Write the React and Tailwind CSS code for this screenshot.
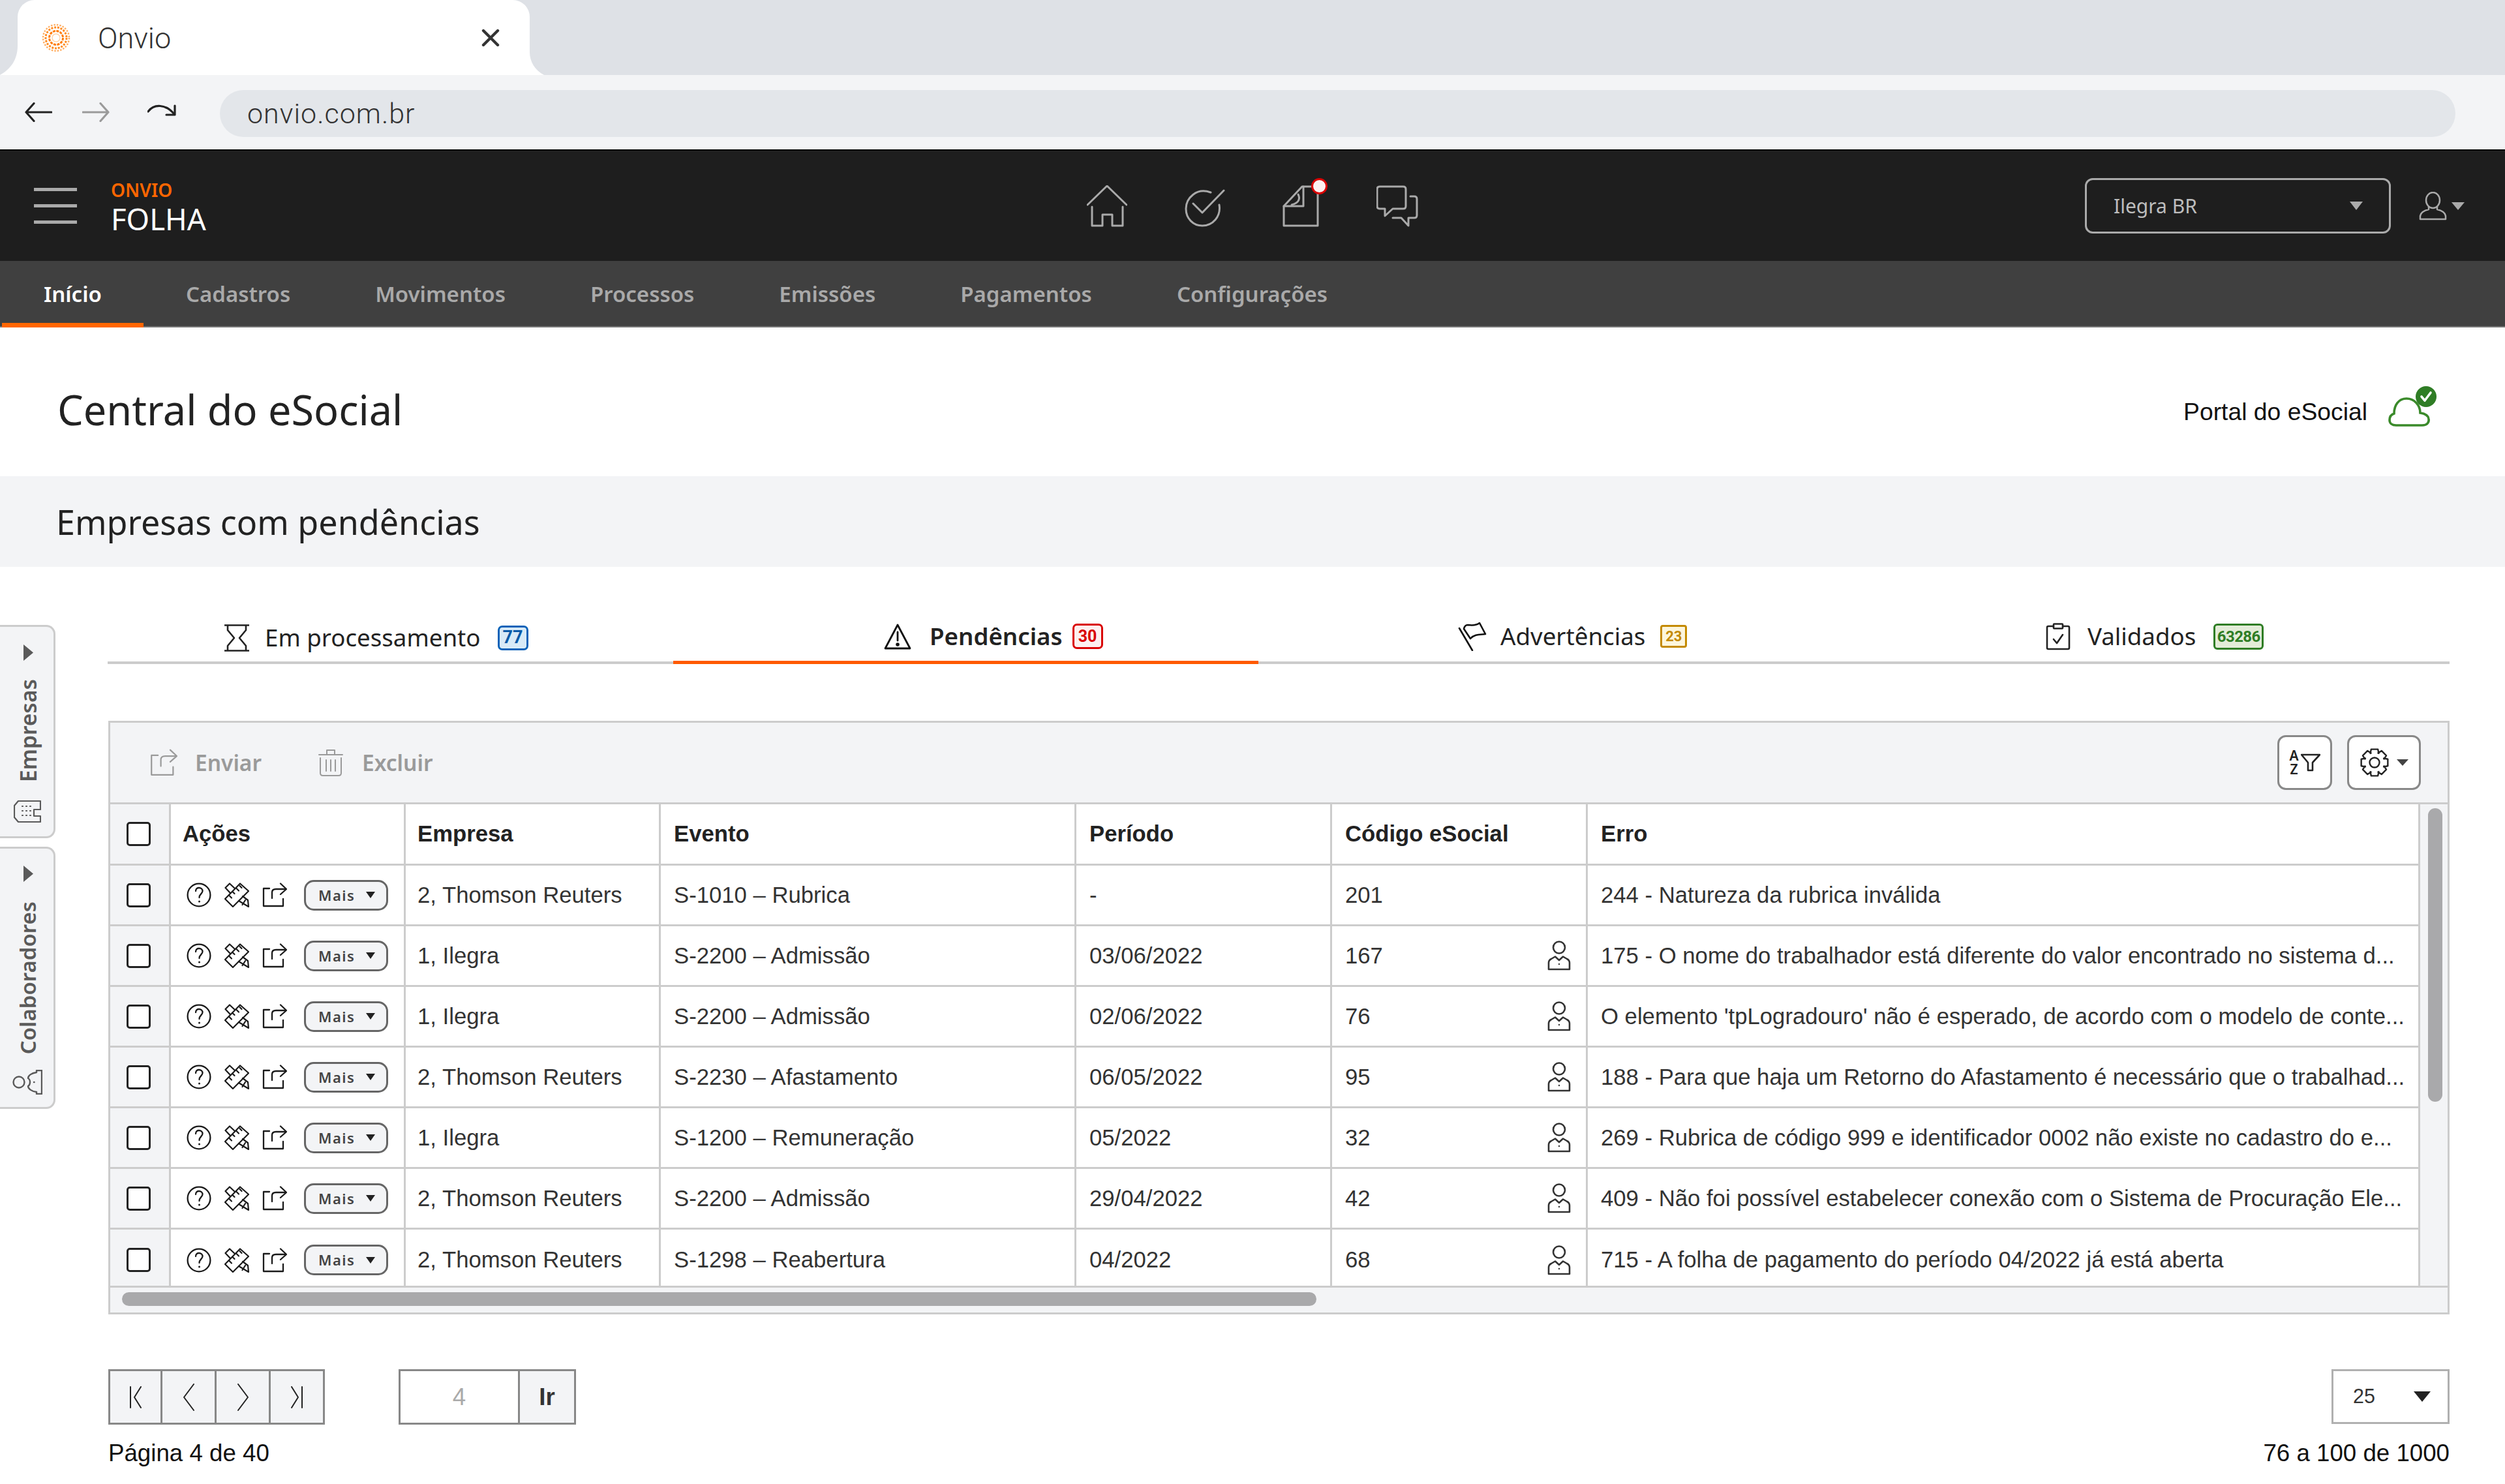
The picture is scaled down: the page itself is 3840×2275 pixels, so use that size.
import React from "react";

const Caret = ({ className = "", dir = "down" }) => (
  <svg viewBox="0 0 20 20" preserveAspectRatio="none" className={className} aria-hidden="true">
    {dir === "down" ? <polygon points="0,0 20,0 10,20" fill="currentColor" /> : <polygon points="0,0 20,10 0,20" fill="currentColor" />}
  </svg>
);

const Home = () => (
  <svg viewBox="0 0 62 64" className="w-[62px] h-[64px]" fill="none" stroke="#aaaaaa" strokeWidth="3" strokeLinecap="round" strokeLinejoin="round">
    <path d="M1 30 L31 1 L61 30" />
    <path d="M8 33 V62 H24 V45 H39 V62 H55 V33" />
  </svg>
);
const CheckCircle = () => (
  <svg viewBox="0 0 62 58" className="w-[62px] h-[58px]" fill="none" stroke="#aaaaaa" strokeWidth="3" strokeLinecap="round" strokeLinejoin="round">
    <path d="M40 5 C18 -3 2 14 2 30 C2 45 13 56 27 56 C43 56 56 42 53 24" />
    <path d="M13 22 L27 36 L60 2" />
  </svg>
);
const Doc = () => (
  <div className="relative w-[56px] h-[64px]">
    <svg viewBox="0 0 56 64" className="w-[56px] h-[64px]" fill="none" stroke="#aaaaaa" strokeWidth="3" strokeLinecap="round" strokeLinejoin="round">
      <path d="M30 2 L2 32 V62 H54 V2 Z" />
      <path d="M2 32 H32 V2" />
      <path d="M24 14 C27 20 26 27 14 30" />
    </svg>
    <span className="absolute right-[-13px] top-[-11px] w-[25px] h-[25px] rounded-full bg-[#fdf0f0] border-[3px] border-[#d90000]" />
  </div>
);
const Chat = () => (
  <svg viewBox="0 0 64 64" className="w-[64px] h-[64px]" fill="none" stroke="#aaaaaa" strokeWidth="3" strokeLinecap="round" strokeLinejoin="round">
    <path d="M5 2 H41 Q45 2 45 6 V32 Q45 36 41 36 H25 L13 47 V36 H5 Q1 36 1 32 V6 Q1 2 5 2 Z" />
    <path d="M52 17 H58 Q62 17 62 21 V46 Q62 50 58 50 H49 V62 L38 50 H25" />
  </svg>
);
const UserBust = () => (
  <svg viewBox="0 0 43 44" className="w-[43px] h-[44px]" fill="none" stroke="#aaaaaa" strokeWidth="2.5" strokeLinejoin="round" strokeLinecap="round">
    <ellipse cx="21.5" cy="13" rx="10.5" ry="12" />
    <path d="M15 23 V27 Q3 30 2 37 V42 H41 V37 Q40 30 28 27 V23" />
  </svg>
);
const RowPerson = () => (
  <svg viewBox="0 0 36 46" className="w-[36px] h-[46px]" fill="none" stroke="#333333" strokeWidth="2.6" strokeLinejoin="round" strokeLinecap="round">
    <circle cx="18" cy="10.5" r="9" />
    <path d="M2 44 V34 Q2 30 6 28 L12 24.5 L18 30 L24 24.5 L30 28 Q34 30 34 34 V44 Z" />
    <circle cx="18" cy="36" r="1.2" fill="#333333" stroke="none" />
  </svg>
);
const Cloud = () => (
  <svg viewBox="0 0 76 62" className="w-[76px] h-[62px]" fill="none">
    <path d="M12 60 H52 C60 60 63 55 62 50 C61 44 56 42 49 41 C49 29 40 19 28 19 C16 19 9 29 9 42 C3 44 2 48 2 52 C2 57 6 60 12 60 Z" stroke="#3a8a2a" strokeWidth="3.6" />
    <circle cx="58" cy="16" r="16" fill="#2f7d25" />
    <path d="M51 16 L56 22 L65 10" stroke="#ffffff" strokeWidth="3.6" strokeLinecap="round" strokeLinejoin="round" />
  </svg>
);
const Hourglass = () => (
  <svg viewBox="0 0 38 42" className="w-[38px] h-[42px]" fill="none" stroke="#222222" strokeWidth="2.6" strokeLinejoin="round">
    <path d="M0 1.5 H38 M0 40.5 H38" />
    <path d="M5 2 V9 L15 21 L5 33 V40 M33 2 V9 L23 21 L33 33 V40" />
  </svg>
);
const Warn = () => (
  <svg viewBox="0 0 42 40" className="w-[42px] h-[40px]" fill="none" stroke="#111111" strokeWidth="2.8" strokeLinejoin="round" strokeLinecap="round">
    <path d="M21 2 L40 38 H2 Z" />
    <path d="M21 13 V26" />
    <circle cx="21" cy="32" r="1.4" fill="#111111" />
  </svg>
);
const Flag = () => (
  <svg viewBox="0 0 44 44" className="w-[44px] h-[44px]" fill="none" stroke="#111111" strokeWidth="2.6" strokeLinejoin="round" strokeLinecap="round">
    <path d="M2 9 L22 43" />
    <path d="M9 10 C10 6 12 4 15 4 C22 5 28 5 33 1 L42 18 C34 19 25 18 19 25 Z" />
  </svg>
);
const Clip = () => (
  <svg viewBox="0 0 38 42" className="w-[38px] h-[42px]" fill="none" stroke="#222222" strokeWidth="2.6" strokeLinejoin="round" strokeLinecap="round">
    <path d="M12 5 H4 Q2 5 2 7 V38 Q2 40 4 40 H34 Q36 40 36 38 V7 Q36 5 34 5 H26" />
    <rect x="12" y="1.5" width="14" height="7" rx="1" />
    <path d="M12 25 L17 31 L26 18" />
  </svg>
);
const Help = () => (
  <svg viewBox="0 0 38 38" className="w-[38px] h-[38px]" fill="none" stroke="#1a1a1a" strokeWidth="2.3" strokeLinecap="round">
    <circle cx="19" cy="19" r="17.4" />
    <path d="M14 13 C14 9.5 16.5 8 19 8 C22 8 24.5 10 24.5 13 C24.5 17 19.5 17.5 19.5 23" />
    <circle cx="19.5" cy="29" r="1.5" fill="#1a1a1a" stroke="none" />
  </svg>
);
const Tools = () => (
  <svg viewBox="0 0 38 38" className="w-[38px] h-[38px]" fill="none" stroke="#1a1a1a" strokeWidth="2.2" strokeLinejoin="round" strokeLinecap="round">
    <path d="M1 25 L24 1.5 L37 13 L13 37 Z" />
    <path d="M7 19.5 L11 23.5 M12.5 14 L15.5 17 M18 8.5 L22 12.5 M23.5 5 L26.5 8" />
    <path d="M9 16 L1.5 8 L8 1.5 L16 9" />
    <path d="M22 28 L37 37 L36 27 L28 21" />
    <path d="M27.5 34 L32 27" />
  </svg>
);
const Share = ({ color = "#1a1a1a", sw = 2.3, w = 38, h = 38 }) => (
  <svg viewBox="0 0 38 38" style={{ width: w, height: h }} fill="none" stroke={color} strokeWidth={sw} strokeLinejoin="round" strokeLinecap="round">
    <path d="M11 9 H2 V36 H32 V25" />
    <path d="M15 24 V15 Q15 10 21 10 H36" />
    <path d="M28 1.5 L37 10 L28 18" />
  </svg>
);
const Trash = () => (
  <svg viewBox="0 0 38 42" className="w-[38px] h-[42px]" fill="none" stroke="#9a9a9a" strokeWidth="2" strokeLinejoin="round" strokeLinecap="round">
    <path d="M1 9 H37 M13 9 V2 H25 V9" />
    <path d="M3 14 V37 Q3 41 7 41 H31 Q35 41 35 37 V14" />
    <path d="M12 17 V34 M19 17 V34 M26 17 V34" />
  </svg>
);
const Building = () => (
  <svg viewBox="0 0 42 34" className="w-[42px] h-[34px]" fill="none" stroke="#5a5a5a" strokeWidth="2.2" strokeLinejoin="round" strokeLinecap="round">
    <path d="M41 1 H7 L1 8 V26 L7 33 H41 V24 H31 V14 H41 Z" />
    <path d="M13 9 H14 M19 9 H20 M25 9 H26 M13 16 H14 M19 16 H20 M25 16 H26 M13 23 H14 M19 23 H20 M25 23 H26" />
  </svg>
);
const Group = () => (
  <svg viewBox="0 0 46 38" className="w-[46px] h-[38px]" fill="none" stroke="#5a5a5a" strokeWidth="2.4" strokeLinejoin="round" strokeLinecap="round">
    <circle cx="10" cy="19" r="8.5" />
    <path d="M45 1 H37 V4 C29 5 24 9 24 13 C28 15 28 23 24 25 C24 29 29 33 37 34 V37 H45 Z" />
    <path d="M33 19 H33.5" />
  </svg>
);
const Logo = () => (
  <svg viewBox="0 0 44 44" className="w-[44px] h-[44px]" fill="none">
    <circle cx="22" cy="22" r="20" stroke="#ffb066" strokeWidth="2.5" strokeDasharray="2.5 2" />
    <circle cx="22" cy="22" r="16" stroke="#ff8a1f" strokeWidth="3" strokeDasharray="3 1.8" />
    <circle cx="22" cy="22" r="10.5" stroke="#ff7a00" strokeWidth="3" strokeDasharray="4 1.5" />
    <circle cx="22" cy="22" r="6" stroke="#ffd2a6" strokeWidth="1.4" />
  </svg>
);
const Arrow = ({ color, flip }) => (
  <svg viewBox="0 0 42 30" className={`w-[42px] h-[30px] ${flip ? "-scale-x-100" : ""}`} fill="none" stroke={color} strokeWidth="3.2" strokeLinecap="round" strokeLinejoin="round">
    <path d="M41 15 H2 M14 1.5 L2 15 L14 28.5" />
  </svg>
);
const Chevron = ({ d, w, h }) => (
  <svg viewBox={`0 0 ${w} ${h}`} style={{ width: w, height: h }} fill="none" stroke="#222222" strokeWidth="2" strokeLinecap="round" strokeLinejoin="round">
    <path d={d} />
  </svg>
);

const gearPath = (() => {
  const pts = [];
  const n = 8, ro = 21, ri = 15.5, cx = 22, cy = 22;
  for (let i = 0; i < n; i++) {
    const a = (i * 2 * Math.PI) / n - Math.PI / 2;
    const w = 0.25, g = 0.18;
    pts.push([a - w - g, ri], [a - w, ro], [a + w, ro], [a + w + g, ri]);
  }
  return pts.map(([a, r], i) => `${i ? "L" : "M"}${(cx + r * Math.cos(a)).toFixed(2)} ${(cy + r * Math.sin(a)).toFixed(2)}`).join(" ") + " Z";
})();
const Gear = () => (
  <svg viewBox="0 0 44 44" className="w-[44px] h-[44px]" fill="none" stroke="#222222" strokeWidth="2.4" strokeLinejoin="round">
    <path d={gearPath} />
    <circle cx="22" cy="22" r="7.5" />
  </svg>
);

const Badge = ({ children, className }) => (
  <span className={`inline-flex items-center justify-center border-[3px] rounded-[7px] font-bold font-['Roboto',sans-serif] ${className}`}>{children}</span>
);

const nav = ["Início", "Cadastros", "Movimentos", "Processos", "Emissões", "Pagamentos", "Configurações"];
const TR = "2, Thomson Reuters";
const IL = "1, Ilegra";
const rows = [
  [TR, "S-1010 – Rubrica", "-", "201", false, "244 - Natureza da rubrica inválida"],
  [IL, "S-2200 – Admissão", "03/06/2022", "167", true, "175 - O nome do trabalhador está diferente do valor encontrado no sistema d..."],
  [IL, "S-2200 – Admissão", "02/06/2022", "76", true, "O elemento 'tpLogradouro' não é esperado, de acordo com o modelo de conte..."],
  [TR, "S-2230 – Afastamento", "06/05/2022", "95", true, "188 - Para que haja um Retorno do Afastamento é necessário que o trabalhad..."],
  [IL, "S-1200 – Remuneração", "05/2022", "32", true, "269 - Rubrica de código 999 e identificador 0002 não existe no cadastro do e..."],
  [TR, "S-2200 – Admissão", "29/04/2022", "42", true, "409 - Não foi possível estabelecer conexão com o Sistema de Procuração Ele..."],
  [TR, "S-1298 – Reabertura", "04/2022", "68", true, "715 - A folha de pagamento do período 04/2022 já está aberta"],
];

const gridCols = "grid grid-cols-[93px_360px_391px_637px_392px_392px_1276px]";
const cell = "flex items-center pl-[18px] border-r-[3px] border-[#cccccc] min-w-0";
const cellB = "flex items-center pl-[20px] border-r-[3px] border-[#cccccc] min-w-0";
const Box = () => <span className="w-[37px] h-[37px] rounded-[5px] border-[3px] border-[#222222] bg-white" />;

const Row = ({ r, last }) => (
  <div className={`${gridCols} h-[93px] ${last ? "" : "border-b-[3px] border-[#cccccc]"} text-[34.7px] text-[#333333]`}>
    <div className="flex items-center justify-center bg-[#f3f4f6] border-r-[3px] border-[#cccccc] pr-[4px]"><Box /></div>
    <div className={`${cell} gap-[20px] !pl-[24px]`}>
      <Help /><Tools /><Share />
      <span className="ml-[6px] h-[47px] w-[129px] shrink-0 rounded-[15px] border-[3px] border-[#666666] bg-[#f3f4f6] flex items-center pl-[19px] font-['Noto_Sans',sans-serif] text-[22px] font-semibold tracking-[1.5px] text-[#444444]">
        Mais
        <Caret className="w-[14px] h-[10px] ml-[17px] text-[#222222]" />
      </span>
    </div>
    <div className={cell}>{r[0]}</div>
    <div className={cellB}>{r[1]}</div>
    <div className={cellB}>{r[2]}</div>
    <div className={`${cellB} justify-between pr-[23px]`}>
      <span>{r[3]}</span>
      {r[4] && <RowPerson />}
    </div>
    <div className={`${cellB} whitespace-nowrap overflow-hidden`}>{r[5]}</div>
  </div>
);

export default function App() {
  return (
    <div className="w-[3840px] h-[2275px] overflow-hidden bg-white font-['Noto_Sans',sans-serif] text-[#222222]">
      {/* browser tab strip */}
      <div className="h-[115px] bg-[#dee1e6] flex items-end">
        <svg viewBox="0 0 27 45" className="w-[27px] h-[45px] shrink-0"><path d="M0 45 C16 36 27 22 27 0 V45 Z" fill="#ffffff" /></svg>
        <div className="w-[785px] h-[115px] bg-white rounded-t-[26px] flex items-center pl-[37px] pr-[46px]">
          <Logo />
          <span className="ml-[42px] text-[45px] font-light font-['Roboto',sans-serif] text-[#333333] mt-[3px]">Onvio</span>
          <svg viewBox="0 0 28 28" className="w-[28px] h-[28px] ml-auto" fill="none" stroke="#333333" strokeWidth="4.4" strokeLinecap="round"><path d="M3 3 L25 25 M25 3 L3 25" /></svg>
        </div>
        <svg viewBox="0 0 22 35" className="w-[22px] h-[35px] shrink-0"><path d="M0 0 C0 14 8 28 22 35 H0 Z" fill="#ffffff" /></svg>
      </div>
      {/* browser toolbar */}
      <div className="h-[114px] bg-[#f3f4f6] flex items-center pl-[38px]">
        <Arrow color="#222222" />
        <span className="ml-[46px]"><Arrow color="#9a9a9a" flip /></span>
        <svg viewBox="0 0 44 18" className="w-[44px] h-[18px] ml-[58px] mb-[6px]" fill="none" stroke="#222222" strokeWidth="3.2" strokeLinecap="round" strokeLinejoin="round"><path d="M1 11 C10 -1 28 -1 41 15" /><path d="M42 2 V16 H29" /></svg>
        <div className="ml-[67px] w-[3427px] h-[72px] mt-[4px] rounded-[36px] bg-[#e3e6ea] flex items-center pl-[42px] text-[43px] font-light font-['Roboto',sans-serif] tracking-[1px] text-[#333333]">onvio.com.br</div>
      </div>
      {/* app header */}
      <div className="h-[171px] bg-[#1e1e1e] border-t-[2px] border-black grid grid-cols-[1fr_auto_1fr] items-center">
        <div className="flex items-center pl-[52px]">
          <div className="flex flex-col gap-[20px] w-[66px]">
            <span className="h-[5px] bg-[#aaaaaa]" /><span className="h-[5px] bg-[#aaaaaa]" /><span className="h-[5px] bg-[#aaaaaa]" />
          </div>
          <div className="ml-[52px] flex flex-col pt-[5px]">
            <span className="text-[28px] leading-[34px] font-semibold text-[#ff6600]">ONVIO</span>
            <span className="text-[45.5px] leading-[54px] text-white">FOLHA</span>
          </div>
        </div>
        <div className="flex items-end gap-[88px]">
          <Home />
          <CheckCircle />
          <Doc />
          <Chat />
        </div>
        <div className="flex items-center justify-end pr-[62px]">
          <div className="w-[469px] h-[85px] rounded-[12px] border-[3px] border-[#aaaaaa] flex items-center pl-[41px] pr-[40px] text-[#bdbdbd] text-[30px]">
            Ilegra BR
            <Caret className="w-[20px] h-[13px] ml-auto text-[#aaaaaa]" />
          </div>
          <span className="ml-[43px]"><UserBust /></span>
          <Caret className="w-[20px] h-[12px] ml-[7px] text-[#aaaaaa]" />
        </div>
      </div>
      {/* nav */}
      <div className="h-[102px] bg-[#404040] border-b-[2px] border-[#777777] flex pl-[3px] text-[33px] font-semibold text-[#a9a9a9]">
        {nav.map((n, i) => (
          <div key={n} className={`flex items-center h-[102px] pt-[7px] ${i === 0 ? "px-[64px] text-white border-b-[7px] border-[#ff6600]" : "px-[65px] border-b-[7px] border-transparent"}`}>{n}</div>
        ))}
      </div>
      {/* title */}
      <div className="h-[228px] flex items-center justify-between pl-[88px] pr-[103px]">
        <h1 className="text-[63px] text-[#222222] font-normal mt-[24px]">Central do eSocial</h1>
        <div className="flex items-center gap-[32px] mt-[14px]">
          <span className="font-['Liberation_Sans',sans-serif] text-[37.3px] text-[#111111] mt-[18px]">Portal do eSocial</span>
          <Cloud />
        </div>
      </div>
      {/* section */}
      <div className="h-[139px] bg-[#f3f4f6] flex items-center pl-[86px] text-[52px] text-[#222222]">Empresas com pendências</div>
      {/* body */}
      <div className="flex">
        <aside className="w-[85px] pt-[89px] flex flex-col gap-[13px] shrink-0">
          <div className="h-[327px] bg-[#f3f4f6] border-[3px] border-l-0 border-[#cccccc] rounded-r-[14px] flex flex-col items-center pt-[27px] text-[#5a5a5a] text-[33.5px] font-semibold">
            <Caret dir="right" className="w-[15px] h-[25px] ml-[4px] text-[#5a5a5a]" />
            <span className="[writing-mode:vertical-rl] rotate-180 mt-[28px] leading-[40px] ml-[4px]">Empresas</span>
            <span className="mt-[28px] ml-[2px]"><Building /></span>
          </div>
          <div className="h-[402px] bg-[#f3f4f6] border-[3px] border-l-0 border-[#cccccc] rounded-r-[14px] flex flex-col items-center pt-[26px] text-[#5a5a5a] text-[33px] font-semibold">
            <Caret dir="right" className="w-[15px] h-[25px] ml-[4px] text-[#5a5a5a]" />
            <span className="[writing-mode:vertical-rl] rotate-180 mt-[30px] leading-[40px] ml-[4px]">Colaboradores</span>
            <span className="mt-[24px] ml-[2px]"><Group /></span>
          </div>
        </aside>
        <main className="ml-[80px] w-[3590px] shrink-0">
          {/* tabs */}
          <div className="h-[149px] grid grid-cols-[867px_897px_897px_929px] border-b-[4px] border-[#cccccc] text-[36.7px]">
            <div className="flex items-center pl-[179px] pt-[68px]">
              <Hourglass />
              <span className="ml-[24px]">Em processamento</span>
              <Badge className="ml-[26px] w-[47px] h-[38px] border-[#0a62b8] bg-[#d8eaf7] text-[#0a5aa8] text-[27px]">77</Badge>
            </div>
            <div className="flex items-center pl-[323px] pt-[69px] border-b-[5px] border-[#ff5a00] h-[149px]">
              <Warn />
              <span className="ml-[28px] font-semibold">Pendências</span>
              <Badge className="ml-[15px] w-[47px] h-[39px] border-[#d90000] bg-[#fdf0f0] text-[#d90000] text-[25px]">30</Badge>
            </div>
            <div className="flex items-center pl-[306px] pt-[64px]">
              <Flag />
              <span className="ml-[21px]">Advertências</span>
              <Badge className="ml-[23px] !rounded-[4px] w-[41px] h-[35px] border-[#c48a00] bg-[#fdf6dc] text-[#c48a00] text-[22px]">23</Badge>
            </div>
            <div className="flex items-center pl-[310px] pt-[64px]">
              <Clip />
              <span className="ml-[26px]">Validados</span>
              <Badge className="ml-[27px] !rounded-[6px] w-[77px] h-[40px] border-[#2f7d25] bg-[#e3ecd8] text-[#2f7d25] text-[24px] tracking-tight">63286</Badge>
            </div>
          </div>
          {/* grid */}
          <div className="mt-[87px] ml-[1px] w-[3589px] h-[910px] border-[3px] border-[#cccccc] bg-[#f3f4f6] flex flex-col font-['Liberation_Sans',sans-serif]">
            <div className="h-[125px] shrink-0 border-b-[3px] border-[#cccccc] flex items-center pl-[61px] pr-[41px] font-['Noto_Sans',sans-serif] text-[33.5px] font-semibold text-[#9a9a9a]">
              <Share color="#9a9a9a" sw={2} w={42} h={42} />
              <span className="ml-[27px]">Enviar</span>
              <span className="ml-[87px]"><Trash /></span>
              <span className="ml-[29px]">Excluir</span>
              <div className="ml-auto w-[84px] h-[84px] bg-white rounded-[13px] border-[3px] border-[#888888] flex items-center justify-center gap-[3px]">
                <span className="flex flex-col items-center w-[14px] text-[21px] leading-[21px] font-semibold text-[#222222]">
                  <span>A</span>
                  <span>Z</span>
                </span>
                <svg viewBox="0 0 30 28" className="w-[30px] h-[28px]" fill="none" stroke="#222222" strokeWidth="2.6" strokeLinejoin="round">
                  <path d="M1 2 H29 L18 14 V26 H11 V14 Z" />
                </svg>
              </div>
              <div className="ml-[23px] w-[113px] h-[84px] bg-white rounded-[13px] border-[3px] border-[#888888] flex items-center justify-center gap-[12px]">
                <Gear />
                <Caret className="w-[18px] h-[10px] text-[#444444]" />
              </div>
            </div>
            <div className="flex flex-1 min-h-0">
              <div className="w-[3541px] bg-white shrink-0 border-b-[3px] border-[#cccccc] overflow-hidden">
                <div className={`${gridCols} h-[94px] border-b-[3px] border-[#cccccc] text-[34.7px] font-bold text-[#222222]`}>
                  <div className="flex items-center justify-center bg-[#f3f4f6] border-r-[3px] border-[#cccccc] pr-[4px]"><Box /></div>
                  <div className={cell}>Ações</div>
                  <div className={cell}>Empresa</div>
                  <div className={cellB}>Evento</div>
                  <div className={cellB}>Período</div>
                  <div className={cellB}>Código eSocial</div>
                  <div className={cellB}>Erro</div>
                </div>
                {rows.map((r, i) => <Row key={i} r={r} last={i === rows.length - 1} />)}
              </div>
              <div className="flex-1 border-b-[3px] border-[#cccccc] pt-[6px] pl-[12px] pr-[8px]">
                <div className="h-[450px] rounded-full bg-[#a9a9ab]" />
              </div>
            </div>
            <div className="h-[38px] shrink-0 pl-[18px] pt-[7px]">
              <div className="w-[1831px] h-[21px] rounded-full bg-[#a9a9ab]" />
            </div>
          </div>
          {/* pager */}
          <div className="mt-[84px] ml-[1px] flex justify-between items-start">
            <div>
              <div className="flex">
                <div className="flex h-[85px] border-[3px] border-[#888888] bg-[#f3f4f6] divide-x-[3px] divide-[#888888]">
                  <div className="w-[80px] flex items-center justify-center"><Chevron w={18} h={34} d="M1 1 V33 M17 1 L7 17 L17 33" /></div>
                  <div className="w-[83px] flex items-center justify-center"><Chevron w={17} h={42} d="M16 1 L1 21 L16 41" /></div>
                  <div className="w-[83px] flex items-center justify-center"><Chevron w={17} h={42} d="M1 1 L16 21 L1 41" /></div>
                  <div className="w-[80px] flex items-center justify-center"><Chevron w={18} h={34} d="M17 1 V33 M1 1 L11 17 L1 33" /></div>
                </div>
                <div className="ml-[113px] flex h-[85px] border-[3px] border-[#888888]">
                  <div className="w-[183px] bg-white flex items-center justify-center text-[36.7px] text-[#aaaaaa] font-['Liberation_Sans',sans-serif] border-r-[3px] border-[#888888]">4</div>
                  <div className="w-[83px] bg-[#f3f4f6] flex items-center justify-center text-[36.7px] font-bold text-[#333333] font-['Liberation_Sans',sans-serif]">Ir</div>
                </div>
              </div>
              <div className="mt-[22px] text-[36.7px] leading-[44px] text-[#111111] font-['Liberation_Sans',sans-serif]">Página 4 de 40</div>
            </div>
            <div className="flex flex-col items-end font-['Liberation_Sans',sans-serif]">
              <div className="w-[181px] h-[84px] border-[3px] border-[#b0b0b0] flex items-center pl-[30px] pr-[26px] text-[30.5px] text-[#333333]">
                25
                <Caret className="w-[26px] h-[16px] ml-auto text-[#222222]" />
              </div>
              <div className="mt-[23px] text-[36.7px] leading-[44px] text-[#111111]">76 a 100 de 1000</div>
            </div>
          </div>
        </main>
      </div>
    </div>
  );
}
